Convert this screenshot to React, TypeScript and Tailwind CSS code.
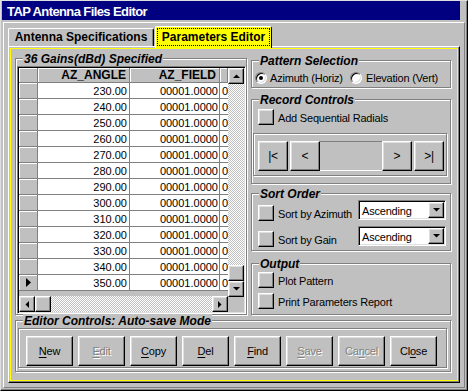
import React from "react";

const raised =
  "border border-t-white border-l-white border-r-black border-b-black shadow-[inset_-1px_-1px_0_#808080,inset_1px_1px_0_#dfdfdf]";
const sunken =
  "border border-t-[#808080] border-l-[#808080] border-r-white border-b-white shadow-[inset_1px_1px_0_#000,inset_-1px_-1px_0_#dfdfdf]";
const etched = "border border-[#808080] shadow-[1px_1px_0_#fff,inset_1px_1px_0_#fff]";
const hatch = "bg-[image:repeating-conic-gradient(#fff_0_25%,#c0c0c0_0_50%)] bg-[length:2px_2px]";
const headCell =
  "bg-[#c0c0c0] border-r border-b border-r-[#808080] border-b-[#808080] shadow-[inset_1px_1px_0_#fff]";

type Dir = "up" | "down" | "left" | "right";

const Arrow = ({ dir }: { dir: Dir }) => {
  const pts = {
    up: "0,4 7,4 3.5,0.5",
    down: "0,0 7,0 3.5,3.5",
    left: "4,0 4,7 0.5,3.5",
    right: "0,0 0,7 3.5,3.5",
  }[dir];
  const vertical = dir === "up" || dir === "down";
  return (
    <svg width={vertical ? 7 : 4} height={vertical ? 4 : 7} viewBox={vertical ? "0 0 7 4" : "0 0 4 7"}>
      <polygon points={pts} fill="#000" />
    </svg>
  );
};

const ScrollBtn = ({ dir }: { dir: Dir }) => (
  <div className={`w-[16px] h-[16px] shrink-0 bg-[#c0c0c0] flex items-center justify-center ${raised}`}>
    <Arrow dir={dir} />
  </div>
);

const Group = ({ title, className = "", children }: { title?: string; className?: string; children?: React.ReactNode }) => (
  <div className={`relative ${etched} ${className}`}>
    {title && (
      <span className="absolute left-[7px] top-[-7px] bg-[#c0c0c0] px-[1px] text-[12px] leading-[14px] font-bold italic tracking-normal whitespace-nowrap">
        {title}
      </span>
    )}
    {children}
  </div>
);

const Check = () => <div className={`w-[16px] h-[16px] shrink-0 bg-[#c0c0c0] ${raised}`} />;

const CheckRow = ({ label, className = "" }: { label: string; className?: string }) => (
  <div className={`flex items-start ${className}`}>
    <Check />
    <span className="ml-[4px] mt-[1px] leading-[16px] whitespace-nowrap">{label}</span>
  </div>
);

const Radio = ({ checked }: { checked?: boolean }) => (
  <span className="w-[12px] h-[12px] shrink-0 rounded-full border border-t-[#808080] border-l-[#808080] border-r-white border-b-white bg-white shadow-[inset_1px_1px_0_#000,inset_-1px_-1px_0_#dfdfdf] flex items-center justify-center">
    {checked && <span className="w-[4px] h-[4px] rounded-full bg-black" />}
  </span>
);

const Select = () => (
  <div className={`w-[88px] h-[20px] shrink-0 ml-auto bg-white p-[1px] flex ${sunken}`}>
    <span className="flex-1 pl-[2px] pt-[1px] leading-[16px]">Ascending</span>
    <div className={`w-[16px] h-[16px] bg-[#c0c0c0] flex items-center justify-center ${raised}`}>
      <Arrow dir="down" />
    </div>
  </div>
);

const Grid = () => {
  const angles = Array.from({ length: 13 }, (_, i) => 230 + i * 10);
  return (
    <div className={`w-[229px] h-[248px] p-[1px] flex bg-[#c0c0c0] ${sunken}`}>
      <div className="w-[209px] flex flex-col">
        <div className="flex h-[15px] shrink-0 font-bold text-[12px] leading-[14px] tracking-normal">
          <div className={`w-[19px] ${headCell}`} />
          <div className={`w-[92px] text-right pr-[3px] ${headCell}`}>AZ_ANGLE</div>
          <div className={`w-[90px] text-right pr-[3px] ${headCell}`}>AZ_FIELD</div>
          <div className={`flex-1 ${headCell}`} />
        </div>
        {angles.map((a, i) => (
          <div key={a} className="flex h-[16px] shrink-0 tracking-normal leading-[14px]">
            <div className={`w-[19px] flex items-center justify-center ${headCell}`}>
              {i === angles.length - 1 && (
                <svg width="5" height="9" viewBox="0 0 5 9">
                  <polygon points="0,0 5,4.5 0,9" fill="#000" />
                </svg>
              )}
            </div>
            <div className="w-[92px] bg-white border-r border-b border-[#808080] text-right pr-[2px] pt-[1px]">{a.toFixed(2)}</div>
            <div className="w-[90px] bg-white border-r border-b border-[#808080] text-right pr-[1px] pt-[1px]">00001.0000</div>
            <div className="flex-1 bg-white border-b border-[#808080] overflow-hidden whitespace-nowrap pl-[2px] pt-[1px]">00001.0000</div>
          </div>
        ))}
        <div className="h-[5px] shrink-0" />
        <div className="flex h-[16px] shrink-0">
          <ScrollBtn dir="left" />
          <div className={`w-[16px] h-[16px] bg-[#c0c0c0] ${raised}`} />
          <div className={`flex-1 ${hatch}`} />
          <ScrollBtn dir="right" />
        </div>
      </div>
      <div className="w-[16px] flex flex-col">
        <ScrollBtn dir="up" />
        <div className={`flex-1 ${hatch}`} />
        <div className={`w-[16px] h-[16px] shrink-0 bg-[#c0c0c0] ${raised}`} />
        <ScrollBtn dir="down" />
        <div className="h-[15px] shrink-0 bg-[#c0c0c0]" />
      </div>
    </div>
  );
};

const buttons: [string, number, boolean][] = [
  ["New", 0, false],
  ["Edit", 0, true],
  ["Copy", 0, false],
  ["Del", 0, false],
  ["Find", 0, false],
  ["Save", 0, true],
  ["Cancel", 2, true],
  ["Close", 2, false],
];

export default function App() {
  return (
    <div className="w-[468px] h-[391px] overflow-hidden bg-[#c0c0c0] border border-t-[#dfdfdf] border-l-[#dfdfdf] border-r-black border-b-black shadow-[inset_-1px_-1px_0_#808080] font-['Liberation_Sans',Arial,sans-serif] text-[11px] tracking-[-0.2px] text-black">
      {/* Title bar */}
      <div className="ml-[1px] w-[458px] h-[19px] bg-[#000080] text-white font-bold text-[13px] tracking-[-0.6px] pl-[5px] pt-[3px] leading-[16px]">
        TAP Antenna Files Editor
      </div>

      {/* Client frame */}
      <div className="ml-[2px] mt-[2px] w-[462px] h-[366px] border border-t-white border-l-white border-r-[#808080] border-b-[#808080] pt-[3px] pl-[4px]">
        {/* Tabs */}
        <div className="flex items-end h-[20px] text-[12px] font-bold tracking-normal">
          <div className="w-[146px] h-[18px] rounded-t-[2px] border-t border-l border-r border-t-white border-l-white border-r-black shadow-[inset_-1px_0_0_#808080] text-center leading-[17px] whitespace-nowrap">
            Antenna Specifications
          </div>
          <div className="relative z-10 ml-[1px] mb-[-2px] w-[117px] h-[22px] rounded-t-[2px] bg-[#ffff00] border-t border-l border-r border-t-white border-l-white border-r-black pl-[1px] pt-[1px]">
            <div className="w-[113px] h-[18px] border border-dotted border-black flex justify-center leading-[16px] whitespace-nowrap">
              Parameters Editor
            </div>
          </div>
        </div>

        {/* Tab page */}
        <div className="w-[452px] h-[337px] p-[1px] border border-t-white border-l-white border-r-black border-b-black shadow-[inset_-1px_-1px_0_#808080]">
          <div className="h-full border border-[#ffff00] pl-[4px] pt-[9px]">
            <div className="flex">
              <Group title="36 Gains(dBd) Specified" className="w-[232px] h-[257px] pl-[1px] pt-[7px]">
                <Grid />
              </Group>

              <div className="ml-[4px] w-[200px] flex flex-col">
                <Group title="Pattern Selection" className="mt-[2px] h-[28px] pl-[3px] pt-[10px]">
                  <div className="flex items-center h-[14px] leading-[14px]">
                    <div className="w-[95px] flex items-center">
                      <Radio checked />
                      <span className="ml-[3px] whitespace-nowrap">Azimuth (Horiz)</span>
                    </div>
                    <Radio />
                    <span className="ml-[4px] whitespace-nowrap">Elevation (Vert)</span>
                  </div>
                </Group>

                <Group title="Record Controls" className="mt-[11px] h-[85px] pt-[9px]">
                  <CheckRow label="Add Sequential Radials" className="ml-[6px]" />
                  <div className={`ml-[1px] mt-[7px] w-[194px] h-[43px] pl-[4px] pt-[7px] flex ${etched}`}>
                    <div className={`w-[30px] h-[30px] flex items-center justify-center text-[12px] ${raised}`}>|&lt;</div>
                    <div className={`ml-[2px] w-[30px] h-[30px] flex items-center justify-center text-[12px] ${raised}`}>&lt;</div>
                    <div className="w-[62px] h-[30px] border-t border-b border-t-[#808080] border-b-white" />
                    <div className={`w-[30px] h-[30px] flex items-center justify-center text-[12px] ${raised}`}>&gt;</div>
                    <div className={`ml-[2px] w-[30px] h-[30px] flex items-center justify-center text-[12px] ${raised}`}>&gt;|</div>
                  </div>
                </Group>

                <Group title="Sort Order" className="mt-[9px] h-[58px] pl-[6px] pr-[4px] pt-[6px]">
                  <div className="flex items-start">
                    <CheckRow label="Sort by Azimuth" className="mt-[5px]" />
                    <Select />
                  </div>
                  <div className="flex items-start mt-[4px]">
                    <CheckRow label="Sort by Gain" className="mt-[5px]" />
                    <Select />
                  </div>
                </Group>

                <Group title="Output" className="mt-[12px] h-[52px] pl-[6px] pt-[8px]">
                  <CheckRow label="Plot Pattern" />
                  <CheckRow label="Print Parameters Report" className="mt-[4px]" />
                </Group>
              </div>
            </div>

            <Group title="Editor Controls: Auto-save Mode" className="mt-[5px] w-[436px] h-[52px] pl-[2px] pt-[7px]">
              <div className={`w-[429px] h-[40px] pl-[7px] pt-[7px] flex gap-[5px] ${etched}`}>
                {buttons.map(([label, idx, disabled]) => (
                  <div
                    key={label}
                    className={`w-[47px] h-[30px] flex items-center justify-center ${raised} ${
                      disabled ? "text-[#808080] [text-shadow:1px_1px_0_#fff]" : ""
                    }`}
                  >
                    {label.slice(0, idx)}
                    <span className="underline underline-offset-[2px]">{label[idx]}</span>
                    {label.slice(idx + 1)}
                  </div>
                ))}
              </div>
            </Group>
          </div>
        </div>
      </div>
    </div>
  );
}
